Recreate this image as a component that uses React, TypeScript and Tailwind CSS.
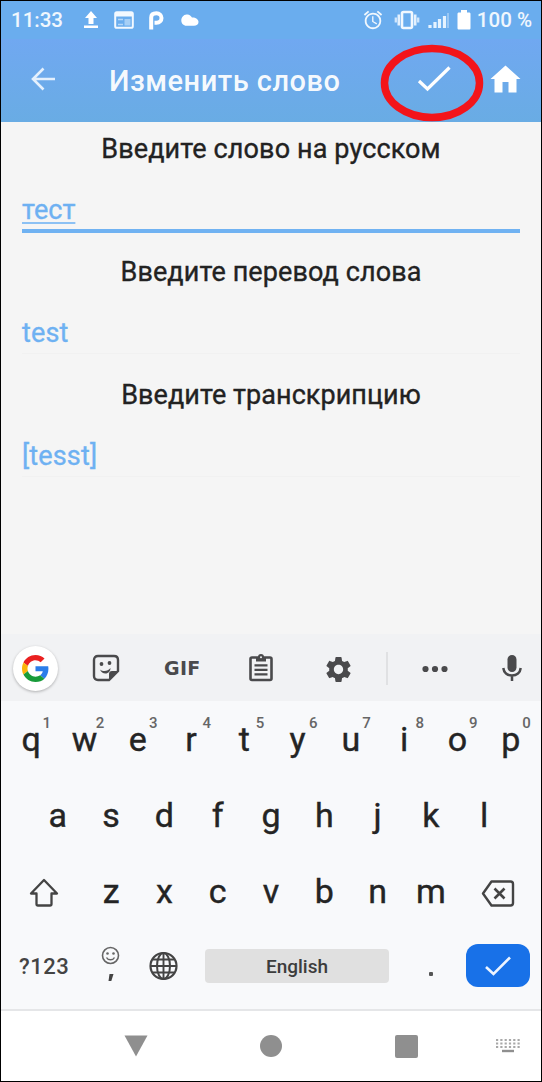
import type { ReactNode } from "react";
import { MdAlarm, MdSettings } from "react-icons/md";

type GlyphProps = { w: number; h: number; className?: string; children: ReactNode };

function Glyph({ w, h, className = "", children }: GlyphProps) {
  return (
    <svg width={w} height={h} viewBox={`0 0 ${w} ${h}`} fill="none" className={`shrink-0 ${className}`}>
      {children}
    </svg>
  );
}

function StatusBar() {
  return (
    <div className="flex h-[38px] items-center bg-[#6aadee] text-[20.5px] font-medium text-white/90">
      <span className="ml-[10px] w-[73px] whitespace-nowrap">11:33</span>
      <Glyph w={14} h={17} className="-mt-[1px]">
        <path d="M7 0L13 7H9.5V13H4.5V7H1ZM0 14.5H14V17H0Z" fill="#fff" />
      </Glyph>
      <Glyph w={20} h={18} className="ml-[16px]">
        <rect x="1.2" y="1.2" width="17.6" height="15.6" rx="1.6" stroke="#f3f9ff" strokeWidth="2" />
        <path d="M1 1H19V5.5H1Z" fill="#f3f9ff" />
        <path d="M4 8.5H9M4 13.5H9" stroke="#b6d8f8" strokeWidth="1.5" />
        <rect x="10.500" y="8" width="6" height="6.500" fill="#a6cff6" />
      </Glyph>
      <Glyph w={15} h={19} className="ml-[15px]">
        <path d="M2.200 18.500V6.500C2.200 3.700 4.300 2.300 7.400 2.300C10.500 2.300 12.500 4.200 12.500 7C12.500 9.800 10.500 11.800 7.600 11.800H5.500" stroke="#fff" strokeWidth="4" />
      </Glyph>
      <Glyph w={18} h={13} className="ml-[17px]">
        <path d="M5.500 0.500C8 0 10 1.500 11 3.500C14.500 3.300 17.500 5.300 17.500 8C17.500 10.500 15.500 11.800 13 11.800H5.500C2.500 11.800 0.300 9.500 0.300 6.300C0.300 3.300 2.500 0.800 5.500 0.500Z" fill="#fff" />
      </Glyph>
      <div className="ml-auto flex items-center pr-[9px]">
        <MdAlarm size={22} className="text-white/90" />
        <Glyph w={26} h={20} className="ml-[10px]">
          <rect x="8" y="2" width="10" height="16" rx="1.5" stroke="#f1f8ff" strokeWidth="2.6" />
          <path d="M4.800 4.500V15.500M21.200 4.500V15.500" stroke="#e4f1fe" strokeWidth="2.600" />
          <path d="M1.800 7.500V12.500M24.200 7.500V12.500" stroke="#d0e6fc" strokeWidth="2.300" />
        </Glyph>
        <Glyph w={22} h={17} className="ml-[8px]">
          <path d="M2 13V16M7 10V16M11.500 7V16M16.500 4V16" stroke="#e6f3ff" strokeWidth="3.200" />
          <path d="M20 1V16" stroke="#9ac7f4" strokeWidth="2" />
        </Glyph>
        <Glyph w={14} h={20} className="ml-[7px]">
          <path d="M4 0H10V2.500H12C13 2.500 13.500 3 13.500 4V18C13.500 19 13 19.500 12 19.500H2C1 19.500 0.500 19 0.500 18V4C0.500 3 1 2.500 2 2.500H4Z" fill="#fff" />
        </Glyph>
        <span className="ml-[6px] whitespace-nowrap">100 %</span>
      </div>
    </div>
  );
}

function AppBar() {
  return (
    <div className="flex h-[83px] items-center bg-linear-to-b from-[#70a8f1] to-[#69ace4] text-white">
      <Glyph w={26} h={26} className="ml-[29px] -mt-[4px]">
        <path d="M25 13H3M13.500 2.500L3 13L13.500 23.500" stroke="#e4f0fd" strokeWidth="2.6" />
      </Glyph>
      <h1 className="ml-[53px] mt-[2px] w-[272px] text-[29px] font-medium tracking-[0.5px] whitespace-nowrap text-white/95">Изменить слово</h1>
      <div className="relative flex h-[78px] w-[104px] items-center justify-center">
        <Glyph w={36} h={28} className="ml-[2px] -mt-[3px]">
          <path d="M3 16L11.500 24L33.500 2.500" stroke="#fff" strokeWidth="3.200" />
        </Glyph>
        <svg width="104" height="78" viewBox="0 0 104 78" fill="none" className="absolute top-[2px] -left-[1px]">
          <ellipse cx="52" cy="39" rx="47.5" ry="34.5" stroke="#f3141a" strokeWidth="7.5" />
        </svg>
      </div>
      <Glyph w={31} h={28} className="ml-[5px] -mt-[3px]">
        <path d="M15.500 0.500L30.500 14H26.500V27.500H18.500V17H12.500V27.500H4.500V14H0.500Z" fill="#fff" />
      </Glyph>
    </div>
  );
}

type FieldProps = { label: string; value: string; active?: boolean; labelClass?: string };

function Field({ label, value, active = false, labelClass = "tracking-[0.050px]" }: FieldProps) {
  return (
    <div className="flex h-[123px] flex-col px-[21px]">
      <div className={`flex h-[55px] items-center justify-center text-[27px] whitespace-nowrap text-[#222] [-webkit-text-stroke:0.35px_#222] ${labelClass}`}>
        {label}
      </div>
      <div className={active ? "flex h-[56px] items-center border-b-[4px] border-[#70b2f2]" : "flex h-[54px] items-center border-b border-[#f1f1f1]"}>
        <span
          className={
            active
              ? "mt-[14px] text-[27px] leading-[34px] text-[#6eb1f2] underline decoration-[#8cc1f4] decoration-[2px] underline-offset-[3px] [-webkit-text-stroke:0.35px_#6eb1f2]"
              : "mt-[12px] text-[27px] leading-[34px] tracking-[0.150px] text-[#6eb1f2] [-webkit-text-stroke:0.35px_#6eb1f2]"
          }
        >
          {value}
        </span>
      </div>
    </div>
  );
}

function GoogleBadge() {
  return (
    <div className="ml-[12px] flex size-[45px] items-center justify-center rounded-full bg-white shadow-[0_1px_3px_rgba(0,0,0,0.28)]">
      <svg width="27" height="27" viewBox="0 0 48 48">
        <path fill="#ea2020" d="M24 9.500c3.540 0 6.710 1.220 9.210 3.600l6.850-6.850C35.900 2.380 30.470 0 24 0 14.620 0 6.510 5.380 2.560 13.220l7.980 6.190C12.430 13.720 17.740 9.500 24 9.500z" />
        <path fill="#2b7de9" d="M46.980 24.550c0-1.570-.15-3.090-.38-4.550H24v9.020h12.940c-.58 2.960-2.260 5.480-4.780 7.180l7.730 6c4.510-4.180 7.090-10.360 7.090-17.650z" />
        <path fill="#fbb40a" d="M10.530 28.590c-.48-1.450-.76-2.990-.76-4.590s.27-3.140.76-4.590l-7.980-6.190C.92 16.460 0 20.120 0 24c0 3.880.92 7.540 2.560 10.780l7.970-6.190z" />
        <path fill="#189b3a" d="M24 48c6.480 0 11.930-2.130 15.890-5.810l-7.730-6c-2.150 1.450-4.920 2.300-8.160 2.300-6.260 0-11.570-4.220-13.470-9.910l-7.980 6.190C6.510 42.620 14.620 48 24 48z" />
      </svg>
    </div>
  );
}

function SuggestionStrip() {
  return (
    <div className="flex h-[67px] items-center bg-[#f1f2f4] pt-[2px] text-[#4a4a4c]">
      <GoogleBadge />
      <Glyph w={28} h={28} className="ml-[34px] -mt-[1px]">
        <path d="M6 2H22C24.500 2 26 3.500 26 6V17L17 26H6C3.500 26 2 24.500 2 22V6C2 3.500 3.500 2 6 2Z" stroke="currentColor" strokeWidth="2.400" />
        <path d="M26 17H20C18 17 17 18 17 20V26Z" fill="currentColor" />
        <circle cx="9.500" cy="10" r="1.900" fill="currentColor" />
        <circle cx="17.500" cy="9" r="1.900" fill="currentColor" />
        <path d="M8 15.500C11 18 16 17.500 18.500 14C18.500 17 16.500 19.500 13.500 19.500C11 19.500 9 18 8 15.500Z" fill="currentColor" />
      </Glyph>
      <span className="ml-[44px] w-[40px] -mt-[1px] font-['DejaVu_Sans',sans-serif] text-[19px] font-bold tracking-[0.300px]">GIF</span>
      <Glyph w={26} h={29} className="ml-[44px] -mt-[3px]">
        <rect x="2.500" y="4.500" width="21" height="22.500" rx="1.500" stroke="currentColor" strokeWidth="2.600" />
        <path d="M8 4.500H18V8.500H8Z" fill="currentColor" />
        <circle cx="13" cy="4" r="3" fill="currentColor" />
        <circle cx="13" cy="4.300" r="1" fill="#f1f2f4" />
        <path d="M6.500 12.300H19.500M6.500 16.800H19.500M6.500 21.300H19.500" stroke="currentColor" strokeWidth="2.200" />
      </Glyph>
      <MdSettings size={31} className="mt-[1px] ml-[49px] shrink-0" />
      <div className="ml-[32px] h-[33px] w-[2px] shrink-0 bg-[#e0e1e3]" />
      <Glyph w={26} h={8} className="ml-[34px]">
        <circle cx="3.500" cy="4" r="3.100" fill="currentColor" />
        <circle cx="13" cy="4" r="3.100" fill="currentColor" />
        <circle cx="22.500" cy="4" r="3.100" fill="currentColor" />
      </Glyph>
      <Glyph w={20} h={28} className="ml-[54px] -mt-[1px]">
        <rect x="5.500" y="1" width="9" height="17" rx="4.500" fill="currentColor" />
        <path d="M1.300 14C1.800 18.500 5.200 21.500 10 21.500C14.800 21.500 18.200 18.500 18.700 14M10 21.500V27" stroke="currentColor" strokeWidth="2.500" />
      </Glyph>
    </div>
  );
}

function Key({ letter, hint }: { letter: string; hint?: string }) {
  return (
    <div className="relative flex h-[76px] w-[53.300px] items-center justify-center text-[34px] leading-[40px] text-[#242424] [-webkit-text-stroke:0.4px_#242424]">
      <span>{letter}</span>
      {hint && (
        <span className="absolute top-[14px] left-[38px] text-[15px] leading-[16px] font-medium text-[#666] [-webkit-text-stroke:0px]">{hint}</span>
      )}
    </div>
  );
}

function Keyboard() {
  return (
    <div className="flex h-[308px] flex-col bg-[#f8f9fb]">
      <div className="flex h-[76px] justify-center">
        {"qwertyuiop".split("").map((c, i) => (
          <Key key={c} letter={c} hint={String((i + 1) % 10)} />
        ))}
      </div>
      <div className="flex h-[76px] justify-center">
        {"asdfghjkl".split("").map((c) => (
          <Key key={c} letter={c} />
        ))}
      </div>
      <div className="flex h-[76px] items-center justify-center">
        <div className="flex w-[80px] justify-center text-[#444]">
          <Glyph w={30} h={29} className="-ml-[1px] mt-[3px]">
            <path d="M15 2L28 15.500H22.500V26Q22.500 27.500 21 27.500H9Q7.500 27.500 7.500 26V15.500H2Z" stroke="currentColor" strokeWidth="2.300" strokeLinejoin="round" />
          </Glyph>
        </div>
        {"zxcvbnm".split("").map((c) => (
          <Key key={c} letter={c} />
        ))}
        <div className="flex w-[80px] justify-center text-[#444]">
          <Glyph w={34} h={27} className="mt-[5px] ml-[1px]">
            <path d="M10.500 1.500H29.500Q32 1.500 32 4V23Q32 25.500 29.500 25.500H10.500L2 13.500Z" stroke="currentColor" strokeWidth="2.400" strokeLinejoin="round" />
            <path d="M13.500 8.500L23.500 18.500M23.500 8.500L13.500 18.500" stroke="currentColor" strokeWidth="2.600" />
          </Glyph>
        </div>
      </div>
      <div className="flex h-[76px] items-center text-[#444]">
        <span className="ml-[18px] w-[82px] -mt-[1px] text-[22px] font-medium tracking-[0.5px]">?123</span>
        <Glyph w={20} h={36} className="-mt-[7px]">
          <circle cx="9.500" cy="9.500" r="8" stroke="#666" strokeWidth="1.600" />
          <circle cx="6.500" cy="7.500" r="1.300" fill="#666" />
          <circle cx="12.500" cy="7.500" r="1.300" fill="#666" />
          <path d="M5.500 11.500C7 14.500 12 14.500 13.500 11.500" stroke="#666" strokeWidth="1.500" />
          <path d="M8.500 28H12.500L10.300 35H7.500Z" fill="#444" />
        </Glyph>
        <Glyph w={30} h={30} className="ml-[28px] -mt-[3px]">
          <circle cx="14.500" cy="15" r="13" stroke="currentColor" strokeWidth="2.200" />
          <ellipse cx="14.500" cy="15" rx="6.500" ry="13" stroke="currentColor" strokeWidth="2" />
          <path d="M14.500 2V28M1.500 15H27.500M3.500 8.500H25.500M3.500 21.500H25.500" stroke="currentColor" strokeWidth="1.900" />
        </Glyph>
        <div className="ml-[26px] -mt-[2px] flex h-[34px] w-[184px] items-center justify-center rounded-[4px] bg-[#e0e0e0] pt-[2px] text-[19px] font-medium text-[#3c3c3c]">English</div>
        <div className="ml-[40px] mt-[14px] size-[4px] rounded-[1px] bg-[#555]" />
        <div className="ml-[33px] -mt-[3px] flex h-[43px] w-[64px] items-center justify-center rounded-[12px] bg-[#1871e8]">
          <Glyph w={28} h={22}>
            <path d="M2 12L9.500 19L26 2.500" stroke="#edf4ff" strokeWidth="2.600" />
          </Glyph>
        </div>
      </div>
    </div>
  );
}

function NavBar() {
  return (
    <div className="flex h-[72px] items-center border-t-2 border-[#e5e6e8] bg-white text-[#8f8f8f]">
      <Glyph w={24} h={22} className="ml-[123px]">
        <path d="M0.500 0.500H23.500L12 21.500Z" fill="currentColor" />
      </Glyph>
      <div className="ml-[112px] size-[22px] rounded-full bg-[#8f8f8f]" />
      <div className="ml-[113px] size-[23px] rounded-[2px] bg-[#8f8f8f]" />
      <Glyph w={24} h={15} className="ml-[78px] -mt-[1px]">
        <path d="M0 2H24M0 5.500H24M0 9H24" stroke="#a8a8a8" strokeWidth="2" strokeDasharray="2.200 2.100" />
        <path d="M6 13H18" stroke="currentColor" strokeWidth="2.400" />
      </Glyph>
    </div>
  );
}

export default function App() {
  return (
    <div className="flex h-[1082px] w-[542px] flex-col overflow-hidden border border-black bg-[#f5f5f5] font-['Roboto',sans-serif]">
      <StatusBar />
      <AppBar />
      <main className="flex h-[512px] flex-col">
        <Field label="Введите слово на русском" value="тест" active labelClass="tracking-[0.120px]" />
        <Field label="Введите перевод слова" value="test" labelClass="tracking-[0.100px]" />
        <Field label="Введите транскрипцию" value="[tesst]" />
      </main>
      <SuggestionStrip />
      <Keyboard />
      <NavBar />
    </div>
  );
}
